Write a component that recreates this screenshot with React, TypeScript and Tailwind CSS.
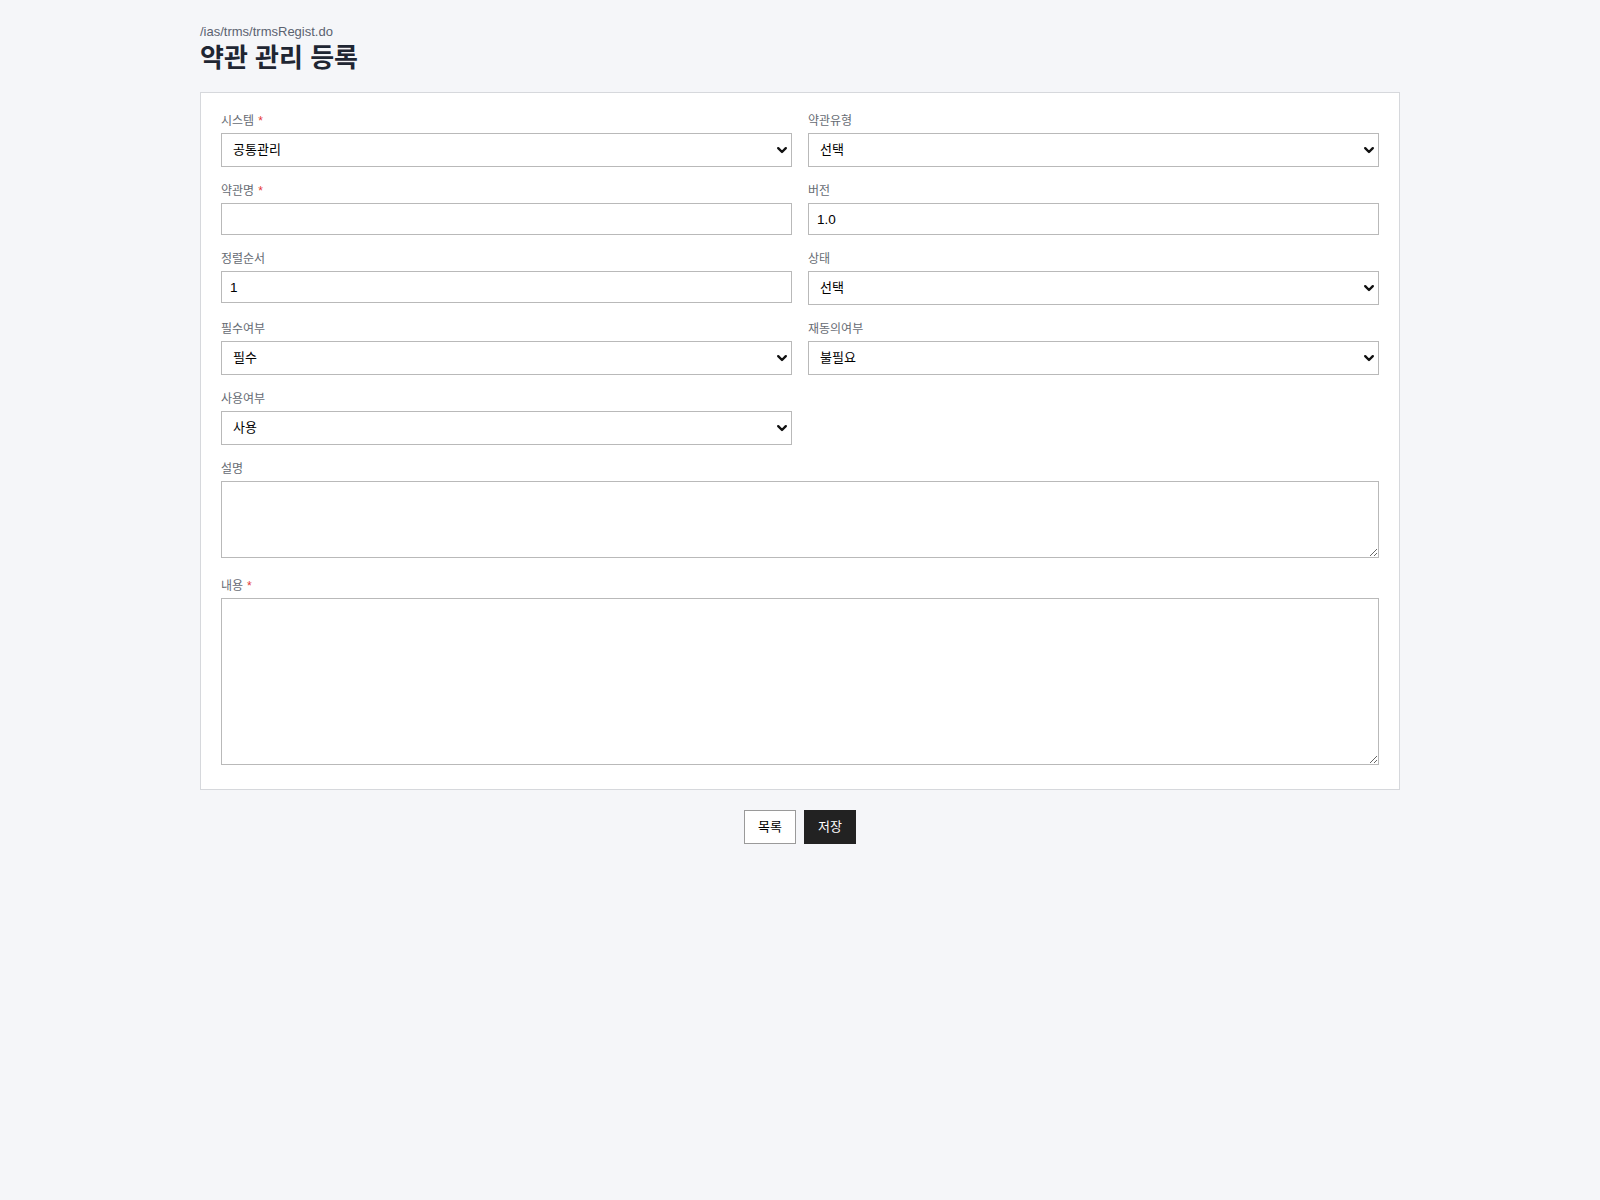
import React from "react";

const FONT = { fontFamily: '"Liberation Sans", "Noto Sans CJK KR", sans-serif' };

interface FieldProps {
  label: string;
  required?: boolean;
  children: React.ReactNode;
  wide?: boolean;
}

const Field = ({ label, required, children, wide }: FieldProps) => (
  <div className={wide ? "col-span-2" : ""}>
    <label className="mb-1 block text-[12px] leading-4 text-[#666b73]">
      {label}
      {required && <span className="ml-1 text-[#e53935]">*</span>}
    </label>
    {children}
  </div>
);

const Chevron = () => (
  <svg
    className="pointer-events-none absolute right-[4px] top-1/2 -translate-y-1/2"
    width="12"
    height="12"
    viewBox="0 0 12 12"
    fill="none"
  >
    <path d="M2.2 4.2 L6 8 L9.8 4.2" stroke="#111" strokeWidth="2.4" strokeLinecap="round" strokeLinejoin="round" />
  </svg>
);

const Select = ({ value, options }: { value: string; options: string[] }) => (
  <div className="relative">
    <select
      defaultValue={value}
      style={FONT}
      className="block h-[34px] w-full appearance-none border border-[#b9b9b9] bg-white pl-[11px] pr-8 text-[13px] text-black outline-none"
    >
      {options.map((o) => (
        <option key={o} value={o}>
          {o}
        </option>
      ))}
    </select>
    <Chevron />
  </div>
);

const TextInput = ({ value }: { value?: string }) => (
  <input
    type="text"
    defaultValue={value}
    style={FONT}
    className="block h-[32px] w-full border border-[#b9b9b9] bg-white px-2 text-[13.5px] text-black outline-none"
  />
);

const TextArea = ({ height }: { height: string }) => (
  <textarea
    style={FONT}
    className={`mb-1 block w-full border border-[#b9b9b9] bg-white p-2 text-[13px] text-black outline-none ${height}`}
  />
);

export default function App() {
  return (
    <div className="min-h-screen bg-[#f5f6f9]" style={FONT}>
      <div className="mx-auto w-[1200px] pt-6">
        <div className="text-[13px] leading-4 text-[#5b6270]">/ias/trms/trmsRegist.do</div>
        <h1 className="mt-[2px] text-[26px] font-bold leading-8 text-[#1f2633]">약관 관리 등록</h1>

        <div className="mt-[18px] border border-[#d6d8dc] bg-white p-5">
          <div className="grid grid-cols-2 items-start gap-x-4 gap-y-4">
            <Field label="시스템" required>
              <Select value="공통관리" options={["공통관리"]} />
            </Field>
            <Field label="약관유형">
              <Select value="선택" options={["선택"]} />
            </Field>

            <Field label="약관명" required>
              <TextInput />
            </Field>
            <Field label="버전">
              <TextInput value="1.0" />
            </Field>

            <Field label="정렬순서">
              <TextInput value="1" />
            </Field>
            <Field label="상태">
              <Select value="선택" options={["선택"]} />
            </Field>

            <Field label="필수여부">
              <Select value="필수" options={["필수", "선택"]} />
            </Field>
            <Field label="재동의여부">
              <Select value="불필요" options={["불필요", "필요"]} />
            </Field>

            <Field label="사용여부">
              <Select value="사용" options={["사용", "미사용"]} />
            </Field>
            <div />

            <Field label="설명" wide>
              <TextArea height="h-[77px]" />
            </Field>

            <Field label="내용" required wide>
              <TextArea height="h-[167px]" />
            </Field>
          </div>
        </div>

        <div className="mt-5 flex justify-center gap-2">
          <button className="h-[34px] w-[52px] border border-[#9a9a9a] bg-white text-[13px] text-black">
            목록
          </button>
          <button className="h-[34px] w-[52px] border border-[#222] bg-[#222] text-[13px] text-white">
            저장
          </button>
        </div>
      </div>
    </div>
  );
}
